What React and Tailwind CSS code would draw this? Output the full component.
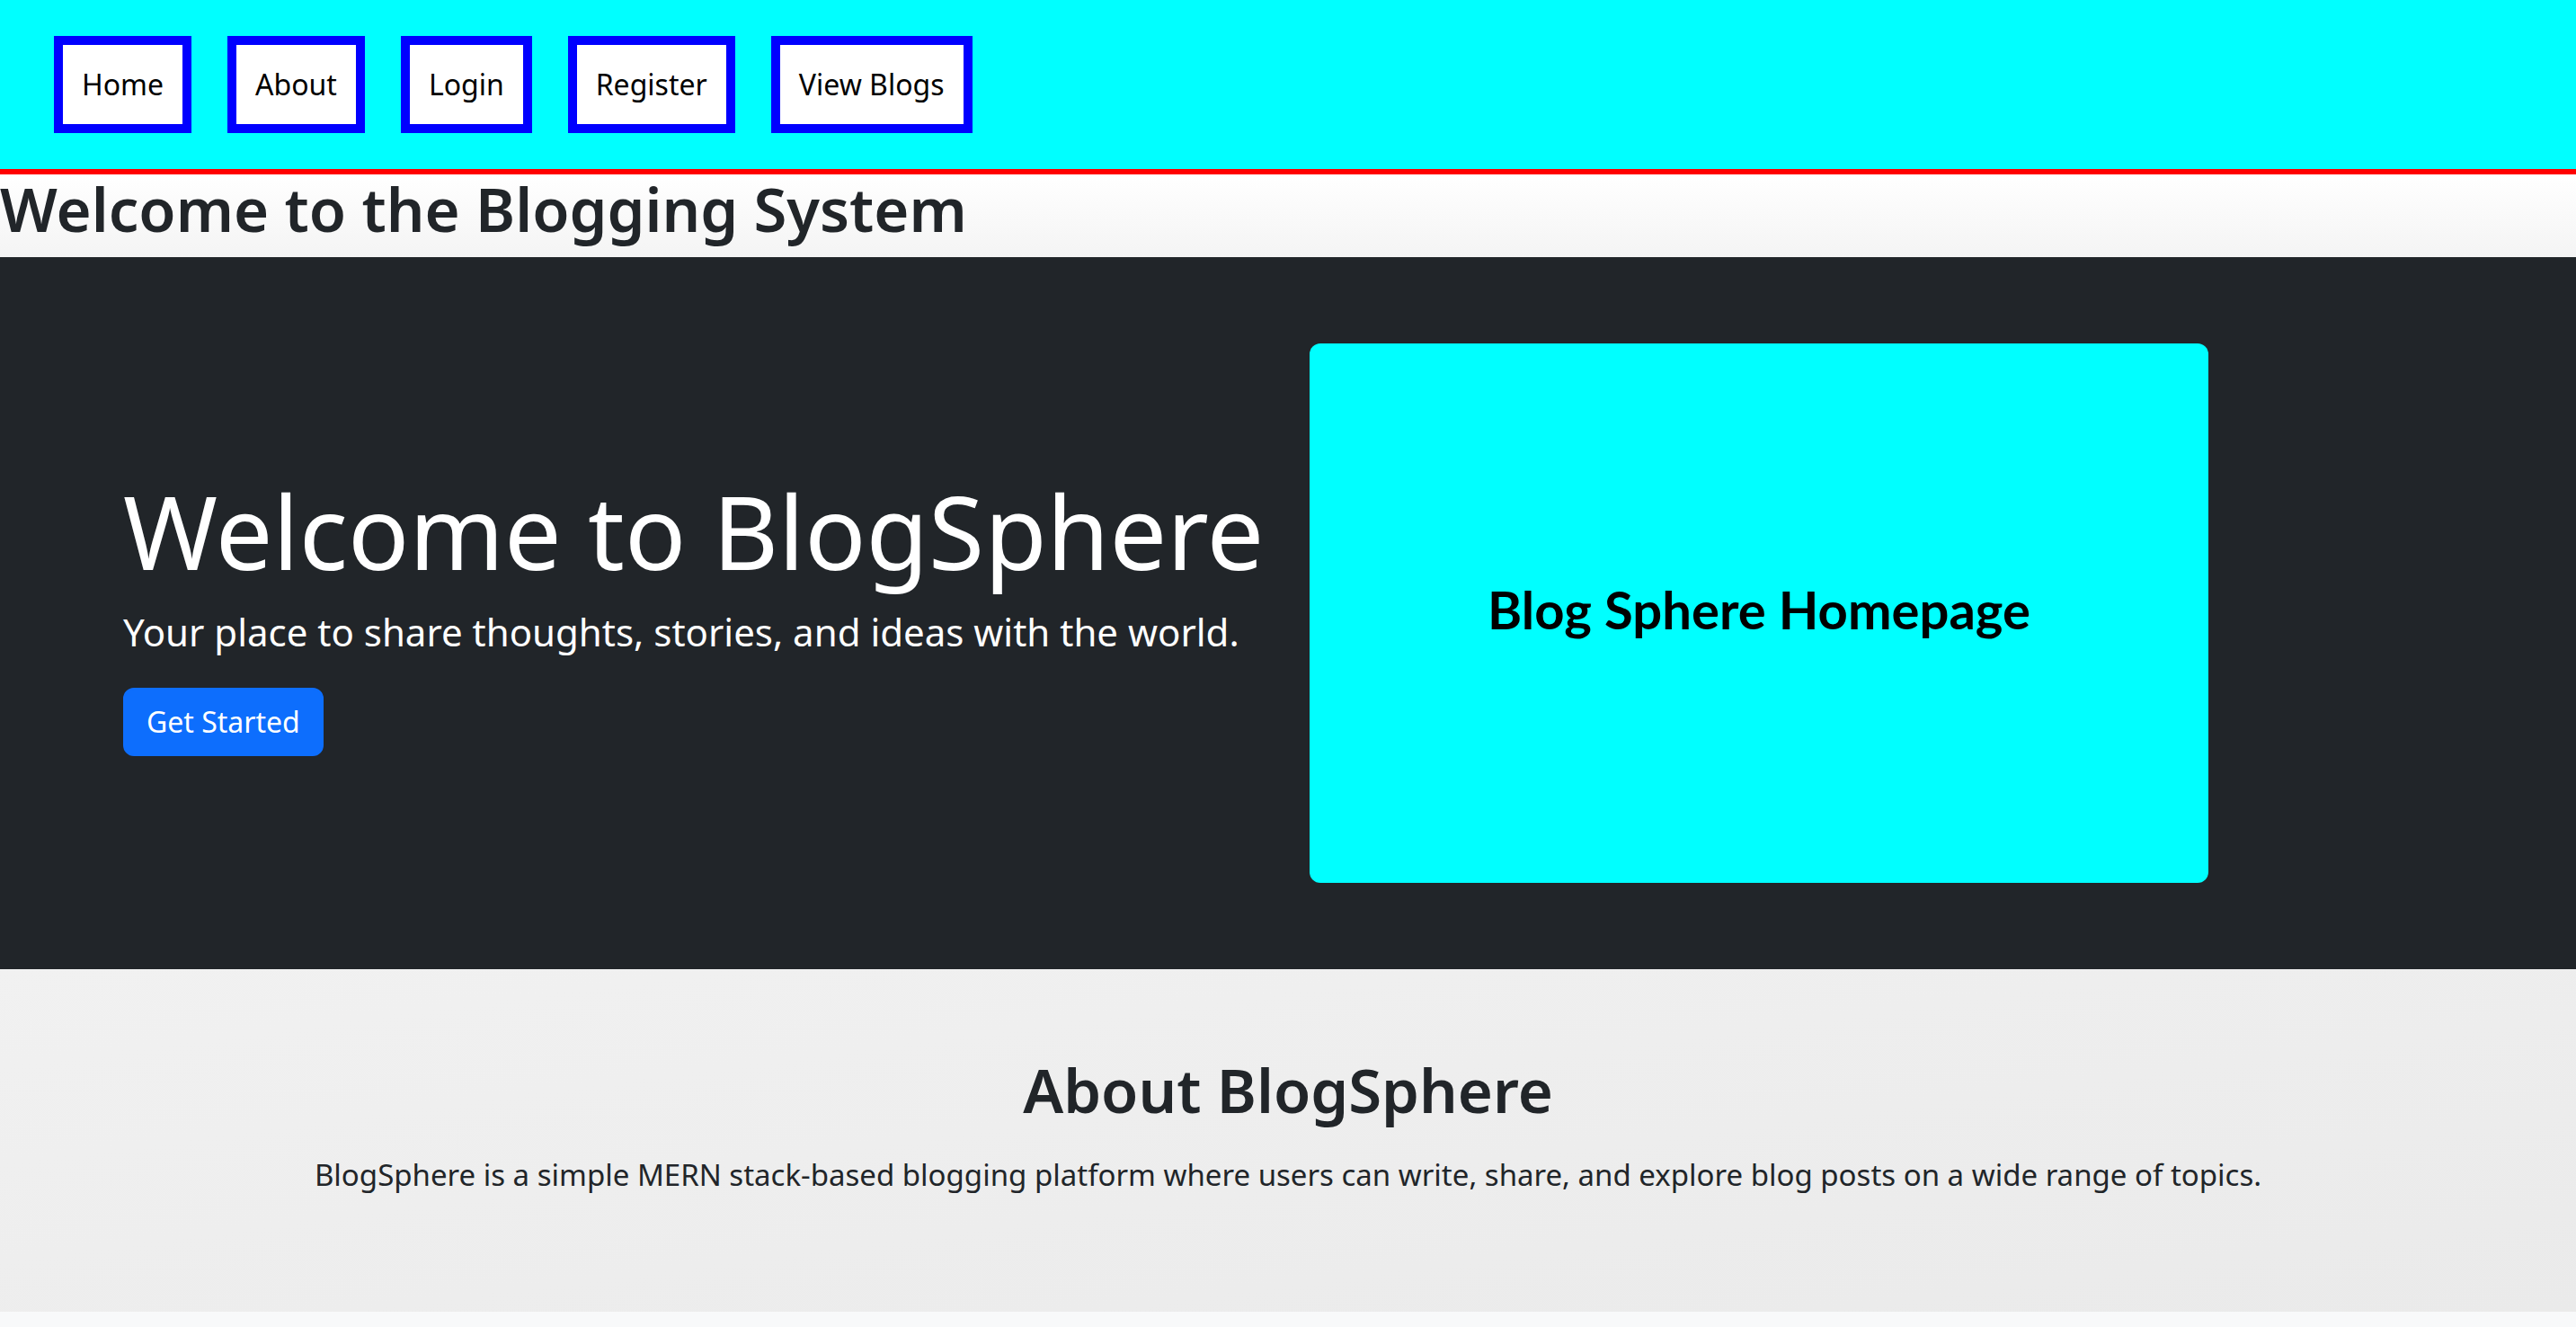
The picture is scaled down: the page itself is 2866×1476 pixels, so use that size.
import React from 'react';

const links = ['Home', 'About', 'Login', 'Register', 'View Blogs'];

export default function App() {
  return (
    <div className="min-h-[1476px] bg-[#f8f9fa] font-['Noto_Sans',sans-serif] text-[#212529]">
      <nav className="bg-[#00ffff] border-b-[6px] border-[#ff0000] flex gap-[40px] px-[60px] py-[40px]">
        {links.map((l) => (
          <a
            key={l}
            href="#"
            className="block bg-white border-[10px] border-[#0000ff] px-[21px] py-[20px] text-[32px] leading-[48px] text-black"
          >
            {l}
          </a>
        ))}
      </nav>

      <header className="bg-gradient-to-b from-white to-[#f4f4f4]">
        <h1 className="text-[67px] leading-[76px] font-semibold pb-[16px]">Welcome to the Blogging System</h1>
      </header>

      <section className="bg-[#212529] text-white py-[96px]">
        <div className="max-w-[2640px] mx-auto flex items-center">
          <div className="w-1/2 px-[24px]">
            <h2 className="text-[113px] leading-[134px] font-normal mb-[16px]">Welcome to BlogSphere</h2>
            <p className="text-[42px] leading-[60px] mb-[32px]">
              Your place to share thoughts, stories, and ideas with the world.
            </p>
            <button className="bg-[#0d6efd] border-2 border-[#0d6efd] rounded-[12px] px-[24px] py-[12px] text-[32px] leading-[48px] text-white">
              Get Started
            </button>
          </div>
          <div className="w-1/2 px-[24px]">
            <div className="w-[1000px] h-[600px] bg-[#00ffff] rounded-[12px] flex items-center justify-center pb-[10px]">
              <span className="font-['Lato',sans-serif] font-bold text-[58px] text-black">Blog Sphere Homepage</span>
            </div>
          </div>
        </div>
      </section>

      <section className="bg-gradient-to-br from-[#f1f1f1] to-[#eaeaea] py-[96px] text-center">
        <h2 className="text-[67px] leading-[77px] font-semibold mb-[32px]">About BlogSphere</h2>
        <p className="text-[33px] leading-[48px] mb-[32px]">
          BlogSphere is a simple MERN stack-based blogging platform where users can write, share, and explore blog posts on a wide range of topics.
        </p>
      </section>
    </div>
  );
}
